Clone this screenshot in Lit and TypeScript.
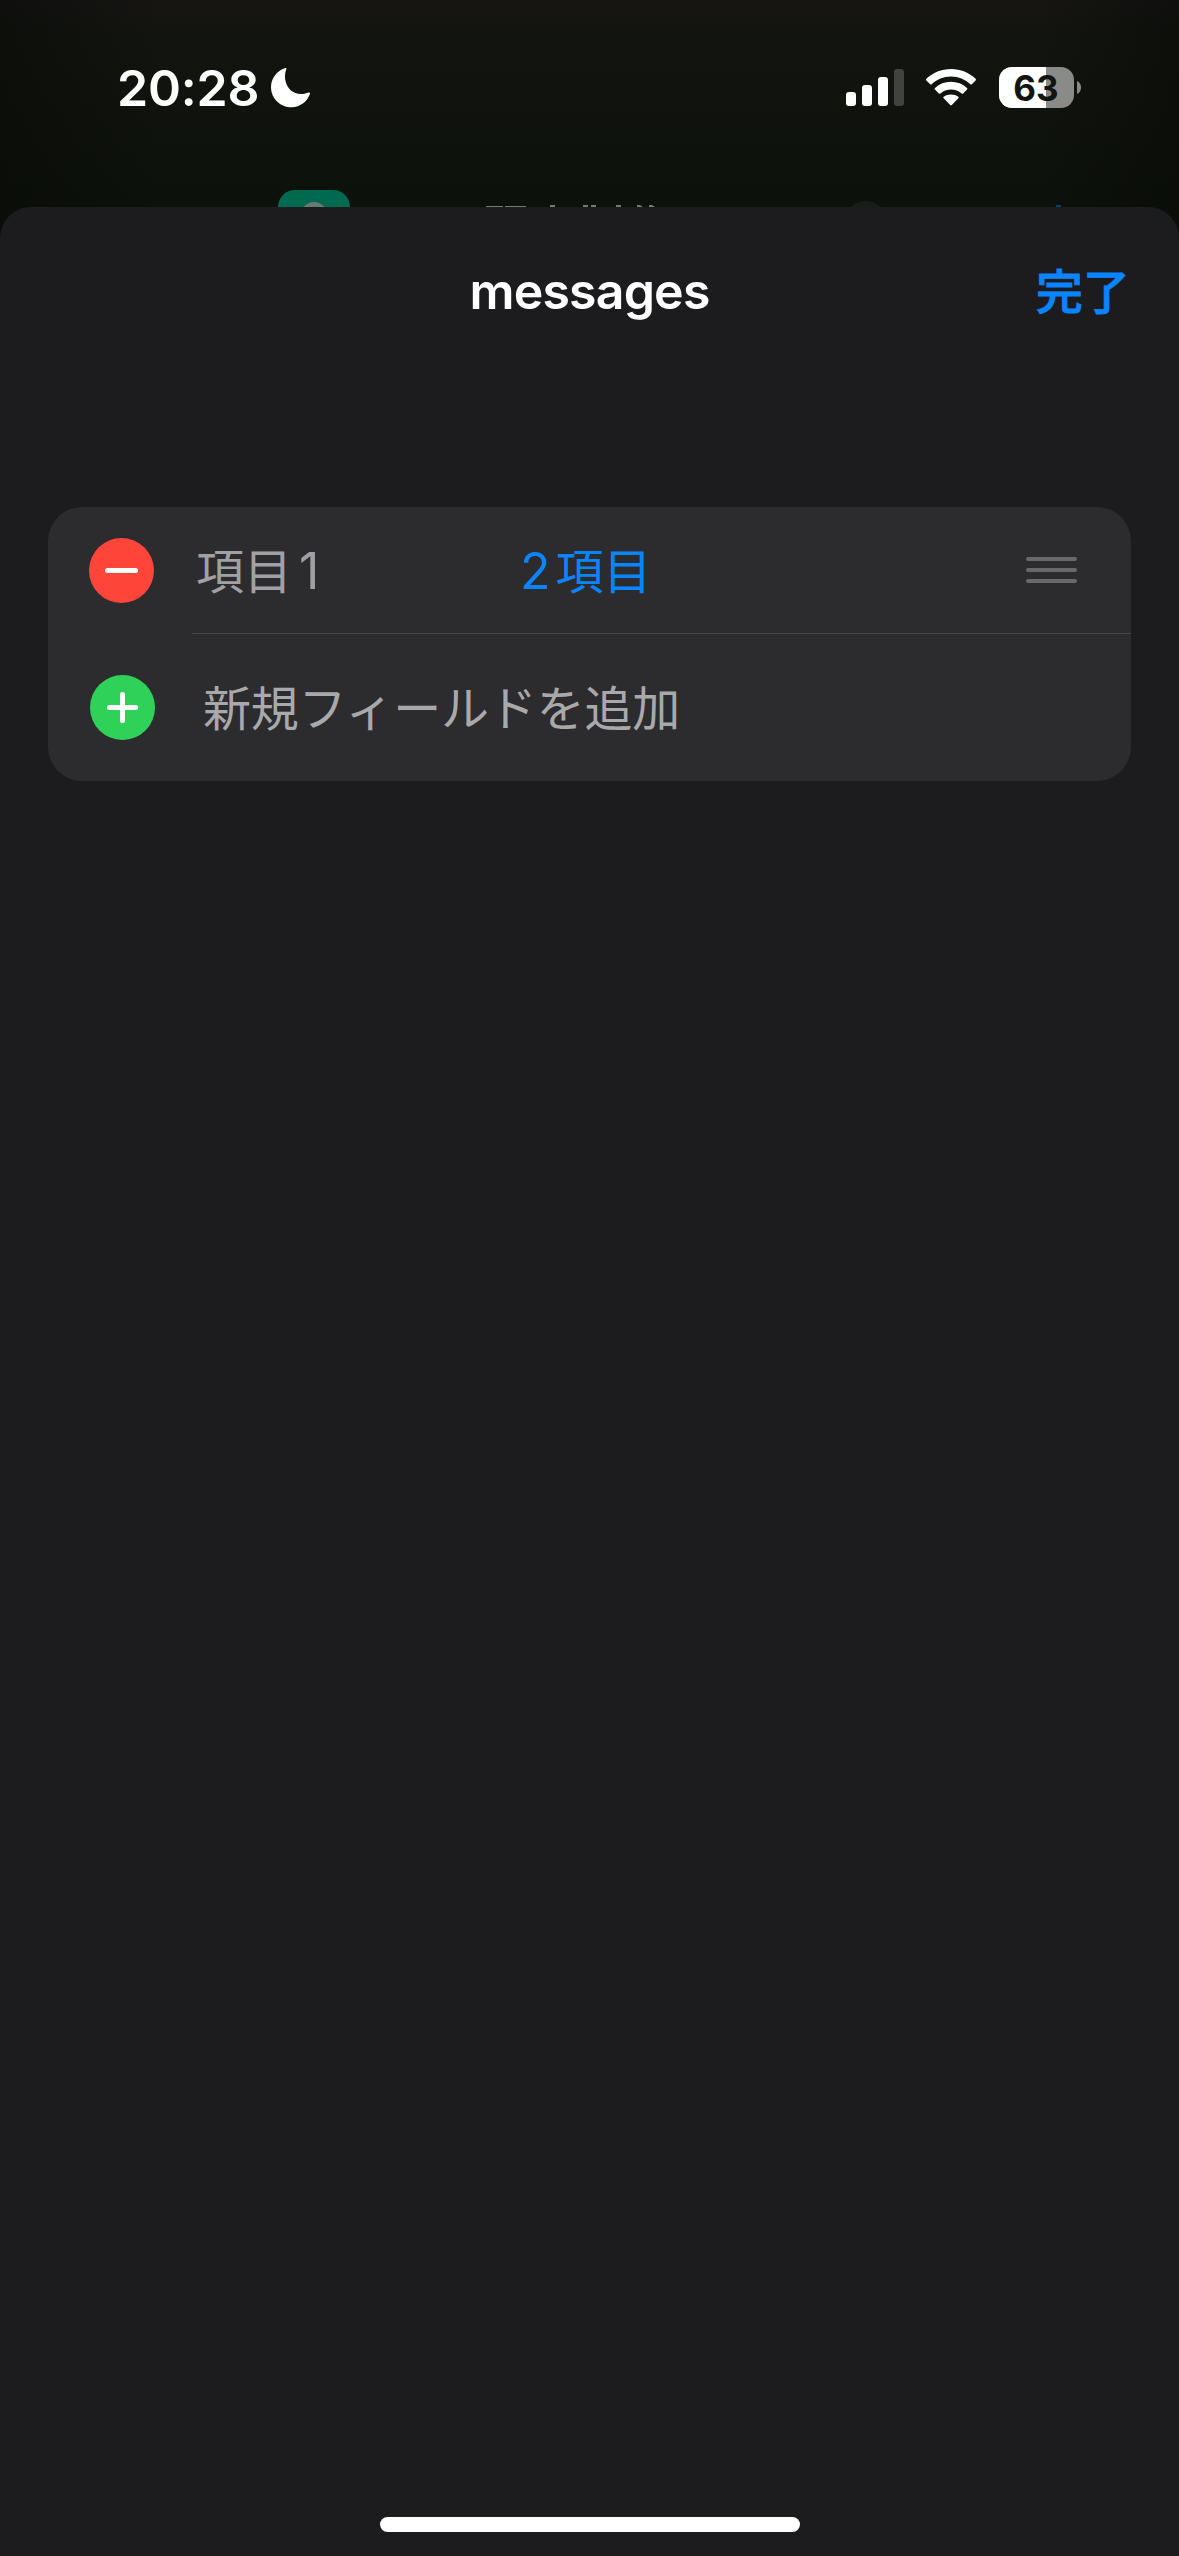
import { LitElement, html, css, svg } from "lit";
import { customElement } from "lit/decorators.js";

@customElement("status-bar")
class StatusBar extends LitElement {
  static styles = css`
    :host { display: flex; justify-content: space-between; height: 177px; box-sizing: border-box; padding: 65px 95px 0 117px; color: #fff; font-family: Inter, sans-serif; }
    .left, .right { display: flex; align-items: flex-start; }
    .time { width: 142px; font-size: 50px; line-height: 46px; font-weight: 600; white-space: nowrap; letter-spacing: -0.2px; }
    .moon { margin: 3px 0 0 12px; display: block; }
    .right { width: 238px; }
    .signal { margin-top: 4px; }
    .wifi { margin: 4px 0 0 21px; }
    .battery { margin: 2px 0 0 22px; position: relative; width: 83px; height: 41px; }
    .battery svg { display: block; }
    .level { position: absolute; inset: 0 9px 0 0; text-align: center; font-size: 35px; line-height: 42px; font-weight: 700; color: #11140f; }
    svg { display: block; flex: none; }
  `;
  render() {
    return html`
      <div class="left">
        <span class="time">20:28</span>
        <svg class="moon" width="40" height="40" viewBox="0 0 40 40">
          <path fill="#fff" d="M15.3 .9C14 4.600 13.600 8 14.200 11.500C15.600 20.500 22 26 30 26C33 26 35.500 25.400 37.600 24.500C38.700 24.100 39.300 24.900 38.900 26.100C36 34 29 39.300 20.800 39.300C9.300 39.300 0 30.500 0 19C0 10.700 5.400 3.200 13.700 .2C15 -.2 15.700 0 15.300 .9Z"/>
        </svg>
      </div>
      <div class="right">
        <svg class="signal" width="58" height="38" viewBox="0 0 58 38">
          <rect x="0" y="23" width="10" height="14" rx="3" fill="#fff"/>
          <rect x="16" y="16" width="10" height="21" rx="3" fill="#fff"/>
          <rect x="32" y="8" width="10" height="29" rx="3" fill="#fff"/>
          <rect x="48" y="0" width="10" height="37" rx="3" fill="#41433f"/>
        </svg>
        <svg class="wifi" width="52" height="38" viewBox="0 0 52 38">
          <path fill="#fff" d="M26 7.600C33.500 7.600 40.300 10.500 45.300 15.200C45.800 15.700 46.300 15.700 46.800 15.200L50.600 11.400C51.100 10.900 51.100 10.200 50.600 9.700C44.200 3.700 35.500 0 26 0S7.800 3.700 1.400 9.700C.9 10.200 .9 10.900 1.400 11.400L5.200 15.200C5.700 15.700 6.200 15.700 6.700 15.200C11.700 10.500 18.500 7.600 26 7.600Z"/>
          <path fill="#fff" d="M26 20.400C30.100 20.400 33.800 21.900 36.600 24.400C37.100 24.900 37.700 24.900 38.200 24.400L42 20.600C42.500 20.100 42.500 19.400 42 18.900C37.700 15 32.100 12.800 26 12.800S14.300 15 10 18.900C9.500 19.400 9.500 20.100 10 20.600L13.800 24.400C14.300 24.900 14.900 24.900 15.400 24.400C18.200 21.900 21.900 20.400 26 20.400Z"/>
          <path fill="#fff" d="M33.300 29.300L26.800 36C26.300 36.500 25.700 36.500 25.200 36L18.700 29.300C18.200 28.800 18.200 28.100 18.700 27.700C20.700 26.200 23.200 25.400 26 25.400S31.300 26.200 33.300 27.700C33.800 28.100 33.800 28.800 33.300 29.300Z"/>
        </svg>
        <div class="battery">
          <svg width="83" height="41" viewBox="0 0 83 41">
            <clipPath id="body"><rect width="75" height="41" rx="13"/></clipPath>
            <g clip-path="url(#body)"><rect width="75" height="41" fill="#8a8b88"/><rect width="47" height="41" fill="#fff"/></g>
            <path fill="#8a8b88" d="M78 14C80.500 15 82 17.500 82 20.500S80.500 26 78 27Z"/>
          </svg>
          <span class="level">63</span>
        </div>
      </div>`;
  }
}

@customElement("backdrop-bar")
class BackdropBar extends LitElement {
  static styles = css`
    :host { display: block; height: 30px; }
    svg { display: block; }
  `;
  render() {
    return html`<svg width="1179" height="30" viewBox="0 0 1179 30">
      <rect x="278" y="13" width="72" height="60" rx="17" fill="#00694f"/>
      <circle cx="314" cy="38" r="13" fill="#677b73"/>
      <circle cx="865.500" cy="45" r="21" fill="#1a1c19"/>
      <g fill="#777976">
        <rect x="486" y="29" width="17" height="1"/><rect x="505" y="29" width="21" height="1"/>
        <rect x="550" y="28" width="5" height="2"/><rect x="583" y="28" width="5" height="2"/>
        <rect x="591" y="28" width="5" height="2"/><rect x="616" y="28" width="5" height="2"/>
        <path d="M637 28H640L643 30H637ZM649 28H652L655 30H649Z"/>
      </g>
      <rect x="1056" y="28" width="5" height="2" fill="#074272"/>
    </svg>`;
  }
}

@customElement("app-root")
class AppRoot extends LitElement {
  static styles = css`
    :host { display: flex; flex-direction: column; width: 1179px; height: 2556px; overflow: hidden; background: linear-gradient(90deg, rgba(5,7,4,.4), transparent 14%, transparent 88%, rgba(5,7,4,.4)), linear-gradient(#161513, #11140f 50px, #0d110b 207px); font-family: Inter, "Noto Sans CJK JP", sans-serif; }
    .sheet { flex: 1; display: flex; flex-direction: column; background: #1c1c1e; border-radius: 31px 31px 0 0; }
    .nav { display: grid; grid-template-columns: 1fr auto 1fr; align-items: center; height: 170px; box-sizing: border-box; padding: 0 49px 3px; }
    .title { grid-column: 2; font-size: 50px; font-weight: 600; color: #fff; letter-spacing: -0.8px; }
    .done { justify-self: end; font-size: 47px; line-height: 60px; margin-top: 3px; font-weight: 500; -webkit-text-stroke: 0.8px #0a84ff; color: #0a84ff; }
    .list { margin: 130px 48px 0; height: 274px; border-radius: 34px; background: #2c2c2e; overflow: hidden; }
    .row { display: flex; align-items: center; box-sizing: border-box; }
    .first { height: 126px; padding: 1px 0 0 41px; }
    .add { height: 147px; padding-left: 42px; }
    .rule { height: 1px; margin-left: 144px; background: #48484a; }
    .key, .value, .hint { margin-top: 2px; font-size: 48px; white-space: nowrap; line-height: 60px; }
    .key, .value { display: flex; align-items: baseline; }
    .key { gap: 7px; width: 324px; margin-left: 42px; color: #a0a0a5; }
    .value { gap: 5px; flex: 1; color: #0a84ff; }
    .num { font-size: 50px; }
    .hint { margin-left: 48px; color: #a9a9ab; letter-spacing: -0.2px; }
    .grip { margin: -1px 54px 0 0; }
    svg { display: block; flex: none; }
    .home { width: 420px; height: 15px; border-radius: 8px; background: #fff; margin: auto auto 24px; }
  `;
  private circle(color: string, plus: boolean) {
    return html`<svg width="65" height="65" viewBox="0 0 65 65">
      <circle cx="32.500" cy="32.500" r="32.500" fill=${color}/>
      <path d=${plus ? "M19.500 32.500H45.500" : "M18.500 32.500H46.500"} stroke="#fff" stroke-width="5" stroke-linecap="round"/>
      ${plus ? svg`<path d="M32.500 19.500V45.500" stroke="#fff" stroke-width="5" stroke-linecap="round"/>` : null}
    </svg>`;
  }
  render() {
    return html`
      <status-bar></status-bar>
      <backdrop-bar></backdrop-bar>
      <div class="sheet">
        <div class="nav"><span class="title">messages</span><span class="done">完了</span></div>
        <div class="list">
          <div class="row first">
            ${this.circle("#ff453a", false)}
            <span class="key"><span>項目</span><span class="num">1</span></span>
            <span class="value"><span class="num">2</span><span>項目</span></span>
            <svg class="grip" width="51" height="26" viewBox="0 0 51 26">
              <path d="M2 2H49M2 13H49M2 24H49" stroke="#69696b" stroke-width="4" stroke-linecap="round"/>
            </svg>
          </div>
          <div class="rule"></div>
          <div class="row add">${this.circle("#30d158", true)}<span class="hint">新規フィールドを追加</span></div>
        </div>
        <div class="home"></div>
      </div>`;
  }
}
